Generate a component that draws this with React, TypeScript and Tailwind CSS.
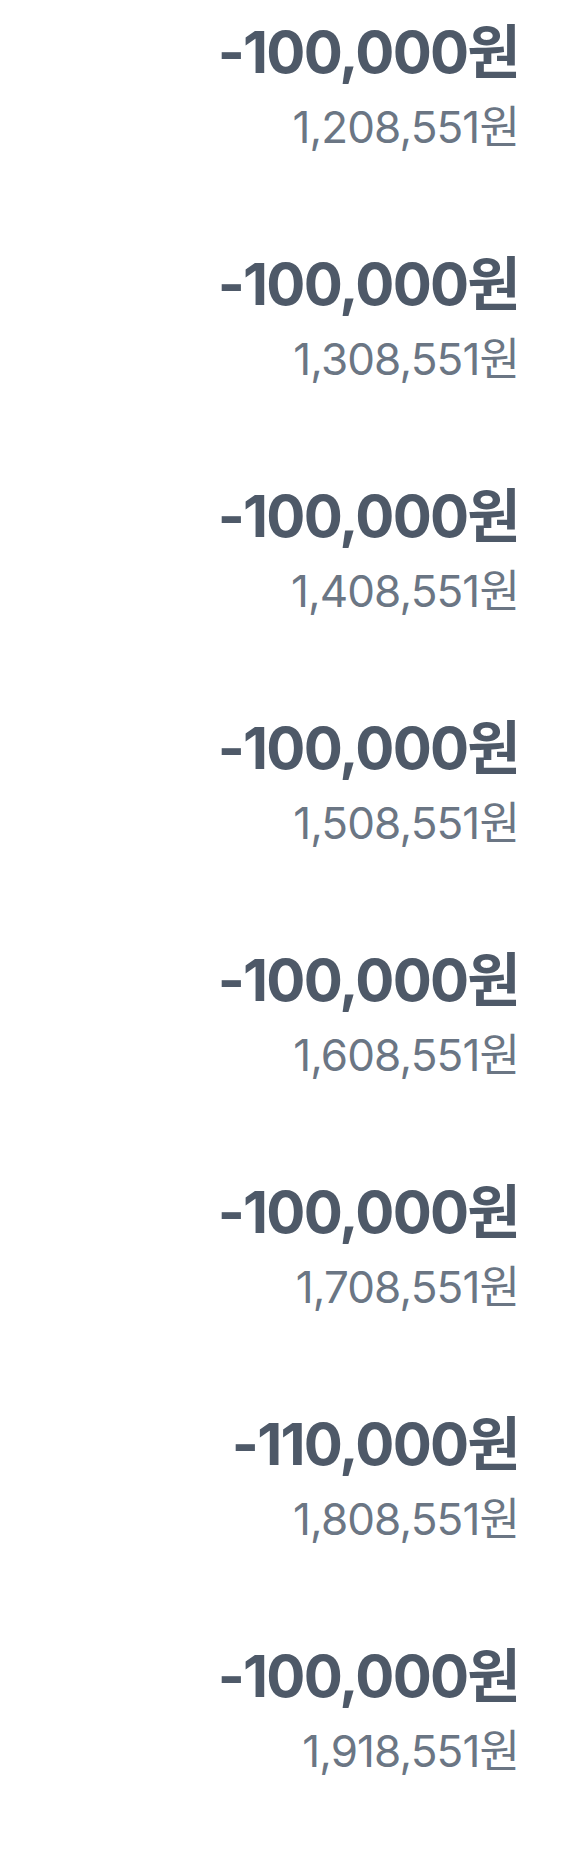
const rows = [
  { amount: '-100,000원', balance: '1,208,551원' },
  { amount: '-100,000원', balance: '1,308,551원' },
  { amount: '-100,000원', balance: '1,408,551원' },
  { amount: '-100,000원', balance: '1,508,551원' },
  { amount: '-100,000원', balance: '1,608,551원' },
  { amount: '-100,000원', balance: '1,708,551원' },
  { amount: '-110,000원', balance: '1,808,551원' },
  { amount: '-100,000원', balance: '1,918,551원' },
];

export default function App() {
  return (
    <div
      className="w-[583px] min-h-[1869px] bg-white"
      style={{ fontFamily: 'Inter, "Noto Sans CJK KR", sans-serif' }}
    >
      {rows.map((row, i) => (
        <div key={i} className="h-[232px] pt-[20px] pr-[64px] flex flex-col items-end">
          <div className="text-[58px] leading-[64px] font-bold tracking-[-0.03em] text-[#4e5968]">
            {row.amount}
          </div>
          <div className="mt-[17px] text-[44px] leading-[52px] font-normal tracking-[-0.02em] text-[#6b7684]">
            {row.balance}
          </div>
        </div>
      ))}
    </div>
  );
}
